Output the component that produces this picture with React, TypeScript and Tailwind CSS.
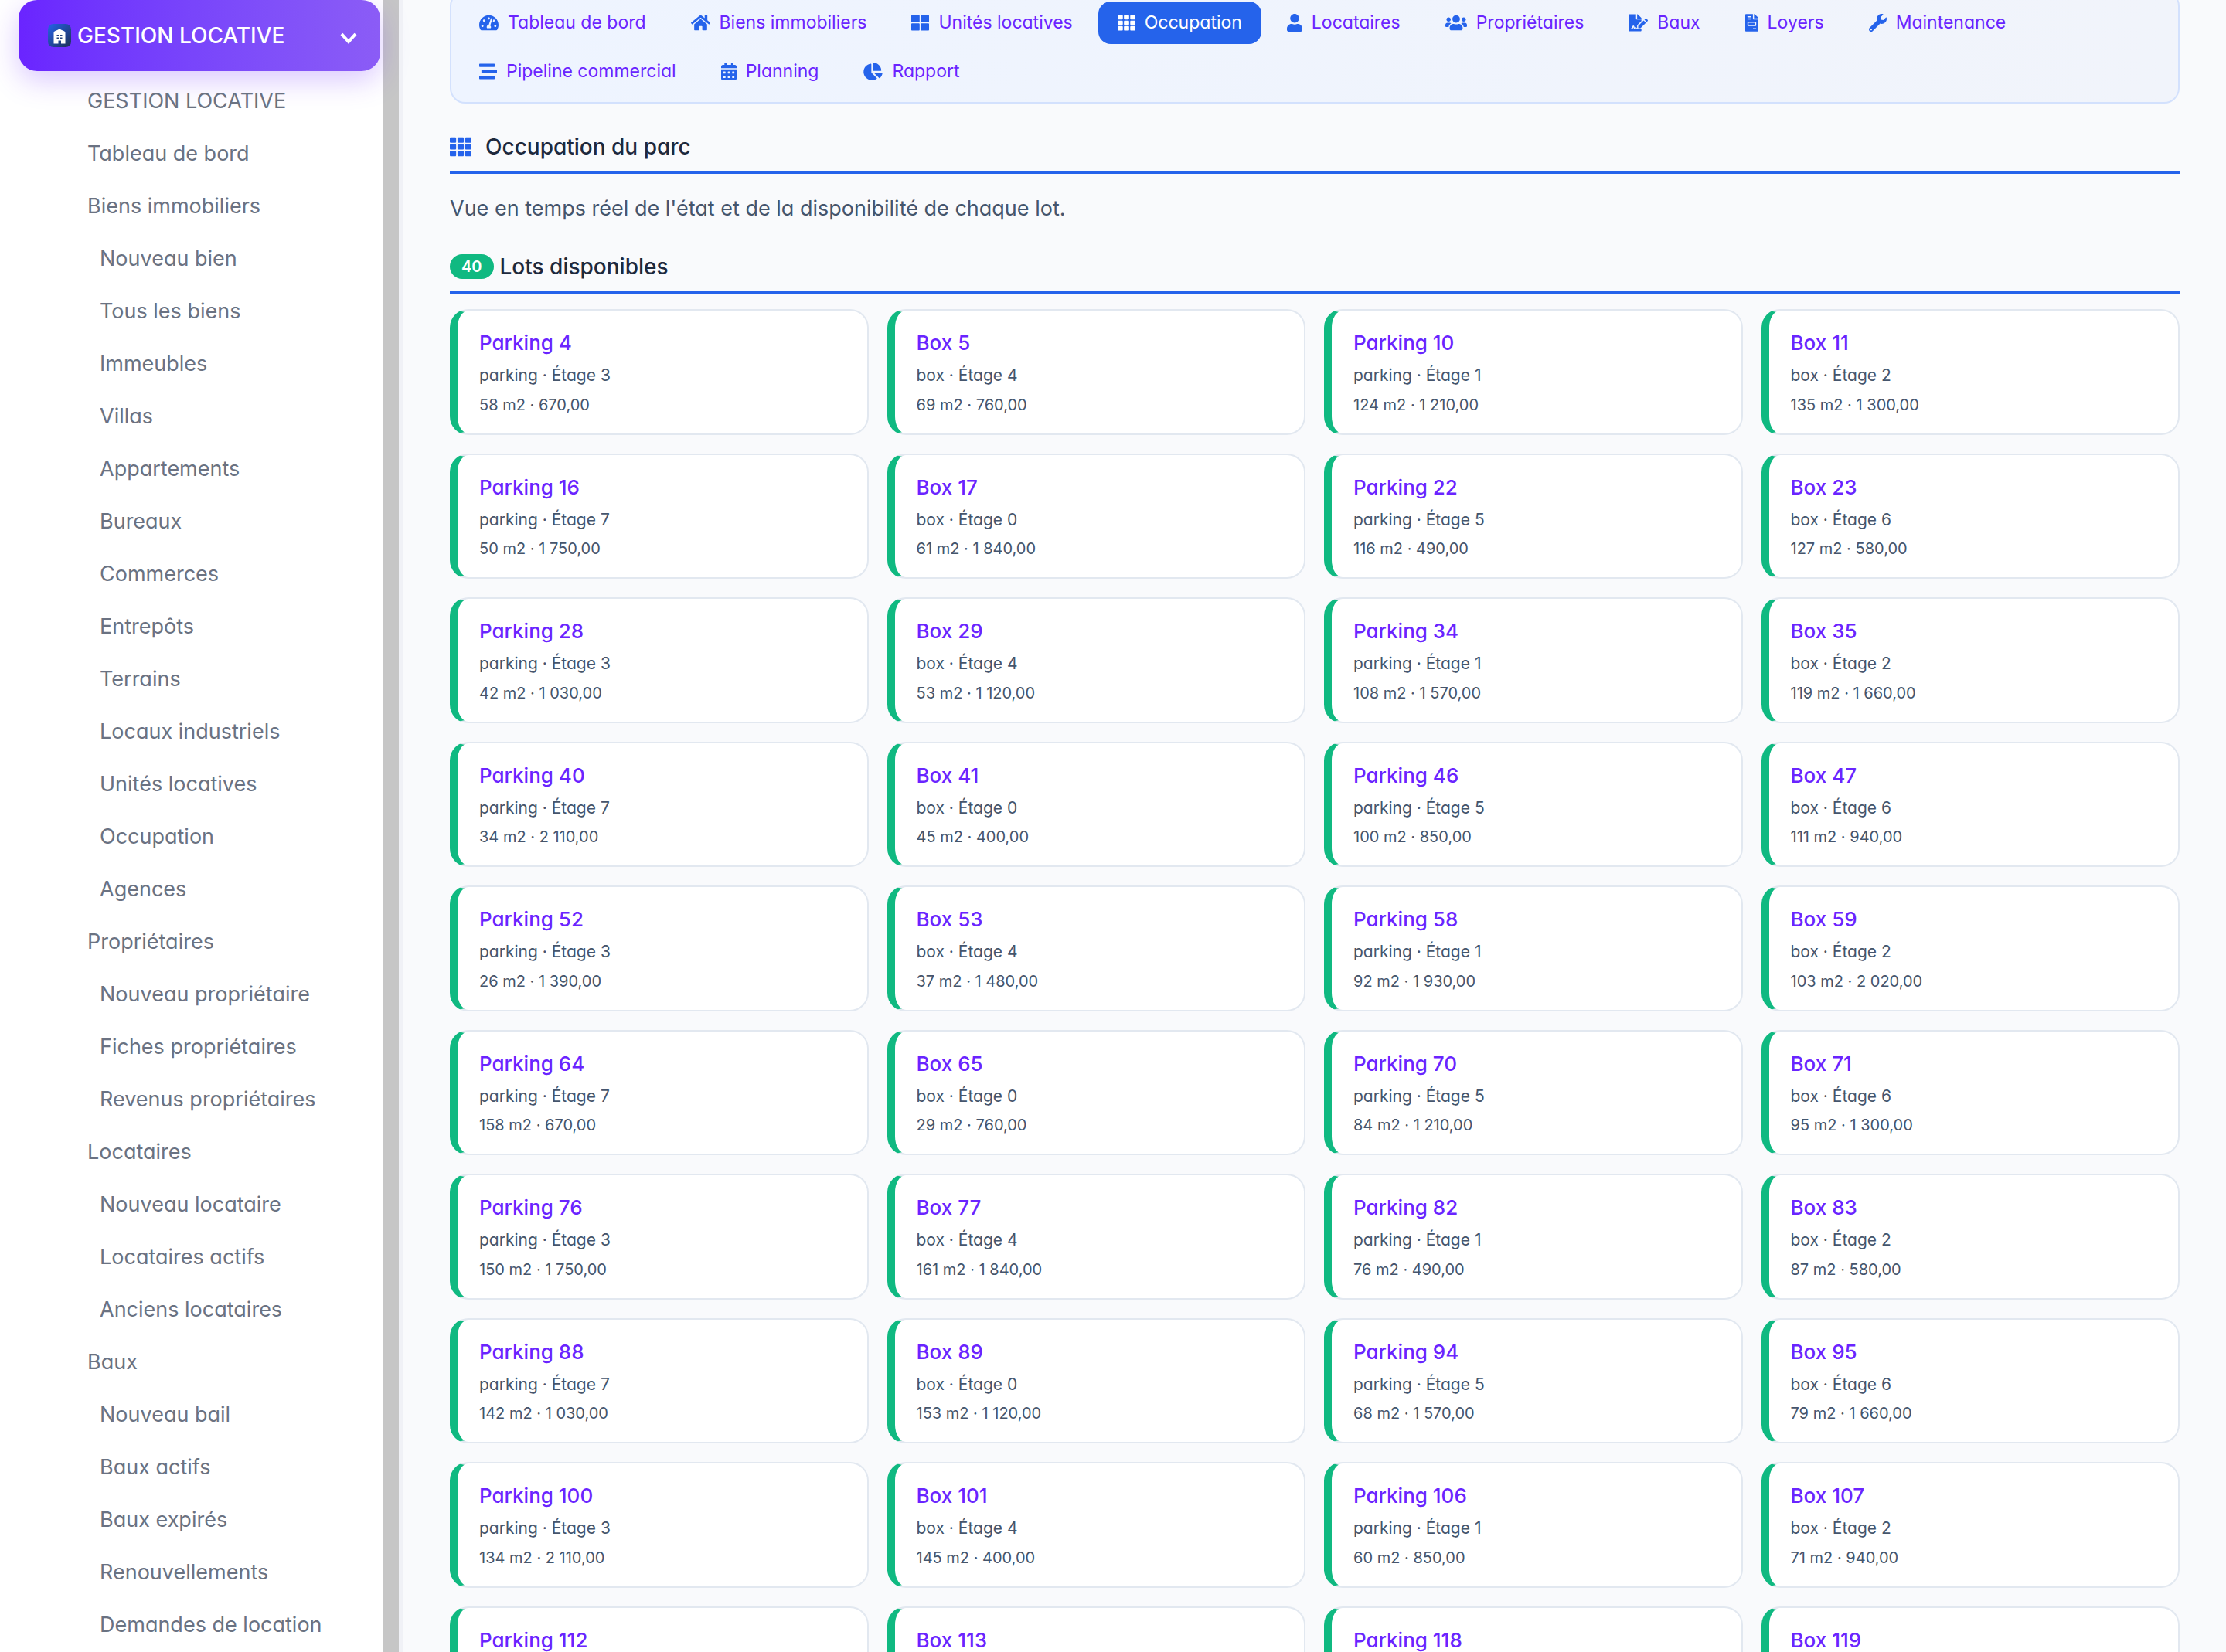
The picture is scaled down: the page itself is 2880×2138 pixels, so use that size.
import {
    FaTachometerAlt, FaHome, FaThLarge, FaTh, FaUser, FaUsers, FaFileSignature,
    FaFileInvoice, FaWrench, FaStream, FaCalendarAlt, FaChartPie
} from "react-icons/fa"
import type { IconType } from "react-icons"


interface MenuItemType{
    label:string,
    sub?:boolean
}

interface TabType{
    label:string,
    icon:IconType,
    size:string,
    active?:boolean
}

const menu:MenuItemType[] = [
    { label: "GESTION LOCATIVE" },
    { label: "Tableau de bord" },
    { label: "Biens immobiliers" },
    { label: "Nouveau bien", sub: true },
    { label: "Tous les biens", sub: true },
    { label: "Immeubles", sub: true },
    { label: "Villas", sub: true },
    { label: "Appartements", sub: true },
    { label: "Bureaux", sub: true },
    { label: "Commerces", sub: true },
    { label: "Entrepôts", sub: true },
    { label: "Terrains", sub: true },
    { label: "Locaux industriels", sub: true },
    { label: "Unités locatives", sub: true },
    { label: "Occupation", sub: true },
    { label: "Agences", sub: true },
    { label: "Propriétaires" },
    { label: "Nouveau propriétaire", sub: true },
    { label: "Fiches propriétaires", sub: true },
    { label: "Revenus propriétaires", sub: true },
    { label: "Locataires" },
    { label: "Nouveau locataire", sub: true },
    { label: "Locataires actifs", sub: true },
    { label: "Anciens locataires", sub: true },
    { label: "Baux" },
    { label: "Nouveau bail", sub: true },
    { label: "Baux actifs", sub: true },
    { label: "Baux expirés", sub: true },
    { label: "Renouvellements", sub: true },
    { label: "Demandes de location", sub: true },
]

const tabs:TabType[] = [
    { label: "Tableau de bord", icon: FaTachometerAlt, size: "w-[25px]" },
    { label: "Biens immobiliers", icon: FaHome, size: "w-[25px]" },
    { label: "Unités locatives", icon: FaThLarge, size: "w-[23px]" },
    { label: "Occupation", icon: FaTh, size: "w-[23px]", active: true },
    { label: "Locataires", icon: FaUser, size: "w-[20px]" },
    { label: "Propriétaires", icon: FaUsers, size: "w-[28px]" },
    { label: "Baux", icon: FaFileSignature, size: "w-[25px]" },
    { label: "Loyers", icon: FaFileInvoice, size: "w-[17px]" },
    { label: "Maintenance", icon: FaWrench, size: "w-[23px]" },
    { label: "Pipeline commercial", icon: FaStream, size: "w-[23px]" },
    { label: "Planning", icon: FaCalendarAlt, size: "w-[20px]" },
    { label: "Rapport", icon: FaChartPie, size: "w-[25px]" },
]

// name, floor, surface, rent
const lots:[string, number, number, string][] = [
    ["Parking 4", 3, 58, "670,00"],
    ["Box 5", 4, 69, "760,00"],
    ["Parking 10", 1, 124, "1 210,00"],
    ["Box 11", 2, 135, "1 300,00"],
    ["Parking 16", 7, 50, "1 750,00"],
    ["Box 17", 0, 61, "1 840,00"],
    ["Parking 22", 5, 116, "490,00"],
    ["Box 23", 6, 127, "580,00"],
    ["Parking 28", 3, 42, "1 030,00"],
    ["Box 29", 4, 53, "1 120,00"],
    ["Parking 34", 1, 108, "1 570,00"],
    ["Box 35", 2, 119, "1 660,00"],
    ["Parking 40", 7, 34, "2 110,00"],
    ["Box 41", 0, 45, "400,00"],
    ["Parking 46", 5, 100, "850,00"],
    ["Box 47", 6, 111, "940,00"],
    ["Parking 52", 3, 26, "1 390,00"],
    ["Box 53", 4, 37, "1 480,00"],
    ["Parking 58", 1, 92, "1 930,00"],
    ["Box 59", 2, 103, "2 020,00"],
    ["Parking 64", 7, 158, "670,00"],
    ["Box 65", 0, 29, "760,00"],
    ["Parking 70", 5, 84, "1 210,00"],
    ["Box 71", 6, 95, "1 300,00"],
    ["Parking 76", 3, 150, "1 750,00"],
    ["Box 77", 4, 161, "1 840,00"],
    ["Parking 82", 1, 76, "490,00"],
    ["Box 83", 2, 87, "580,00"],
    ["Parking 88", 7, 142, "1 030,00"],
    ["Box 89", 0, 153, "1 120,00"],
    ["Parking 94", 5, 68, "1 570,00"],
    ["Box 95", 6, 79, "1 660,00"],
    ["Parking 100", 3, 134, "2 110,00"],
    ["Box 101", 4, 145, "400,00"],
    ["Parking 106", 1, 60, "850,00"],
    ["Box 107", 2, 71, "940,00"],
    ["Parking 112", 7, 126, "1 390,00"],
    ["Box 113", 0, 137, "1 480,00"],
    ["Parking 118", 5, 52, "1 930,00"],
    ["Box 119", 6, 63, "2 020,00"],
]

const Logo = ()=>{
    return(
        <svg viewBox="0 0 30 30" className="size-[30px] shrink-0" aria-hidden="true">
            <defs>
                <linearGradient id="logo" x1="0" y1="0" x2="1" y2="1">
                    <stop offset="0" stopColor="#2563eb" />
                    <stop offset="1" stopColor="#1e2f56" />
                </linearGradient>
            </defs>
            <rect width="30" height="30" rx="7" fill="url(#logo)" />
            <path d="M7.5 11.5 Q7.5 9.5 9.5 9 L12 8 L15 6.5 L18 8 L20.5 9 Q22.5 9.5 22.5 11.5 V25.5 H17 V21.5 H13.5 V25.5 H7.5 Z" fill="#fff" />
            <path d="M11.5 14h2.5v2h-2.5zM16 14h2.5v2h-2.5zM11.5 17.5h2.5v2h-2.5zM16 17.5h2.5v2h-2.5z" fill="#24427f" />
        </svg>
    )
}

const Sidebar = ()=>{
    return(
        <aside className="w-[516px] shrink-0 bg-white border-r-[20px] border-[#c6c6c6]">
            <button type="button" className="ml-6 w-[468px] h-[92px] pl-[38px] pr-[30px] flex items-center rounded-3xl text-white text-[28px] font-medium bg-linear-to-r from-[#6a24ff] to-[#8b5cf6] shadow-[0_12px_36px_rgba(106,36,255,0.25)]">
                <Logo />
                <span className="ml-2 whitespace-nowrap">GESTION LOCATIVE</span>
                <svg viewBox="0 0 22 16" className="mt-2 ml-auto w-[22px] h-4" fill="none" stroke="currentColor" strokeWidth="4" aria-hidden="true">
                    <path d="M2 2 L11 12 L20 2" />
                </svg>
            </button>

            <ul className="mt-[5px]">
                {menu.map((item)=>(
                    <li key={item.label} className={item.sub ? "pl-[129px]" : "pl-[113px]"}>
                        <a href="#" className="block text-[27px] leading-[68px] text-gray-500">{item.label}</a>
                    </li>
                ))}
            </ul>
        </aside>
    )
}

const TabBar = ()=>{
    return(
        <nav className="-mt-3 px-[11px] py-3 flex flex-wrap gap-2 rounded-[20px] border-2 border-[#d3e1fd] bg-linear-to-r from-[#eef4ff] to-[#f1f4fb]">
            {tabs.map(({ label, icon: Icon, size, active })=>(
                <a key={label} href="#" className={active
                    ? "flex items-center gap-3 h-[55px] px-[25px] rounded-2xl text-[23px] bg-[#2563eb] text-white"
                    : "flex items-center gap-3 h-[55px] px-[25px] rounded-2xl text-[23px] text-[#6a24ff]"}>
                    <Icon className={active ? `h-[23px] ${size}` : `h-[23px] ${size} text-[#2563eb]`} />
                    {label}
                </a>
            ))}
        </nav>
    )
}

const LotCard = ({ name, floor, surface, rent }:{ name:string, floor:number, surface:number, rent:string })=>{
    return(
        <a href="#" className="block p-[22px] pl-7 rounded-3xl bg-white border-2 border-l-[10px] border-slate-200 border-l-[#10b981]">
            <div className="text-[26px] leading-normal font-medium text-[#6a24ff]">{name}</div>
            <div className="mt-[7px] text-[21px] leading-normal text-slate-600">
                {name.split(" ")[0].toLowerCase()} · Étage {floor}
            </div>
            <div className="mt-[7px] text-[20px] leading-normal text-slate-600">
                {surface} m2 · {rent}
            </div>
        </a>
    )
}

export default function App(){
    return(
        <div className="flex h-screen overflow-hidden bg-[#f9fafc] font-[Inter,sans-serif] [font-feature-settings:'cv11']">
            <Sidebar />
            <main className="grow min-w-0 px-[60px] border-l-[6px] border-[#f0f1f6]">
                <TabBar />

                <h2 className="mt-9 pb-[11px] flex items-center gap-[18px] border-b-4 border-[#2563eb] text-[28px] leading-10 font-medium text-slate-800">
                    <FaTh className="size-7 text-[#2563eb]" />
                    Occupation du parc
                </h2>
                <p className="mt-[25px] text-[27px] leading-10 text-slate-600">
                    Vue en temps réel de l'état et de la disponibilité de chaque lot.
                </p>

                <h3 className="mt-[35px] pb-[11px] flex items-center gap-2 border-b-4 border-[#2563eb] text-[28px] leading-10 font-medium text-slate-800">
                    <span className="px-[15px] rounded-2xl bg-[#10b981] text-[20px] leading-8 font-semibold text-white">40</span>
                    Lots disponibles
                </h3>
                <div className="mt-5 grid grid-cols-4 gap-6">
                    {lots.map(([name, floor, surface, rent])=>(
                        <LotCard key={name} name={name} floor={floor} surface={surface} rent={rent} />
                    ))}
                </div>
            </main>
        </div>
    )
}
